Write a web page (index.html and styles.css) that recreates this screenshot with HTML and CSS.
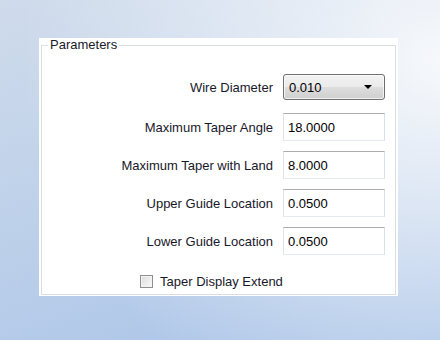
FILE: index.html
```html
<!DOCTYPE html>
<html>
<head>
<meta charset="utf-8">
<link rel="stylesheet" href="styles.css">
</head>
<body>
<div class="panel">
  <fieldset class="group">
    <legend class="legend">Parameters</legend>
    <div class="rows">
      <div class="row row-combo">
        <span class="label">Wire Diameter</span>
        <div class="combo"><span class="combo-text">0.010</span><span class="arrow"></span></div>
      </div>
      <div class="row row-first">
        <span class="label">Maximum Taper Angle</span>
        <div class="field">18.0000</div>
      </div>
      <div class="row">
        <span class="label">Maximum Taper with Land</span>
        <div class="field">8.0000</div>
      </div>
      <div class="row">
        <span class="label">Upper Guide Location</span>
        <div class="field">0.0500</div>
      </div>
      <div class="row">
        <span class="label">Lower Guide Location</span>
        <div class="field">0.0500</div>
      </div>
      <div class="check-row">
        <span class="checkbox"></span>
        <span class="check-label">Taper Display Extend</span>
      </div>
    </div>
  </fieldset>
</div>
</body>
</html>
```
FILE: styles.css
```css
html, body {
  margin: 0;
  width: 440px;
  height: 340px;
  overflow: hidden;
}
body {
  background:
    radial-gradient(ellipse 420px 380px at 440px 60px, rgba(246,248,251,1) 0%, rgba(246,248,251,0) 100%),
    linear-gradient(160deg, #cfdbeb 0%, #c0d2ea 40%, #a8c3e8 100%);
  font-family: "Liberation Sans", Arial, sans-serif;
  font-size: 13px;
  color: #18182a;
  padding: 38px 0 0 39px;
  box-sizing: border-box;
}
.panel {
  width: 359px;
  height: 258px;
  background: #ffffff;
  box-sizing: border-box;
  padding: 0 2px 1px 2px;
  display: flex;
}
.group {
  flex: 1;
  margin: 0;
  border: 1px solid #d9dee4;
  padding: 22px 0 0 6px;
  min-width: 0;
}
.legend {
  padding: 0 2px;
  font-size: 13px;
  line-height: 14px;
}
.rows {
  display: flex;
  flex-direction: column;
}
.row {
  display: grid;
  grid-template-columns: 225px 102px;
  column-gap: 10px;
  align-items: center;
  height: 28px;
  margin-top: 10px;
}
.row-combo {
  height: 26px;
  margin-top: 0;
}
.row-first {
  margin-top: 13px;
}
.label {
  text-align: right;
  white-space: nowrap;
}
.combo {
  height: 26px;
  box-sizing: border-box;
  border: 1px solid #707070;
  border-radius: 3px;
  background: linear-gradient(#f2f2f2 0%, #ebebeb 48%, #dddddd 52%, #cfcfcf 100%);
  box-shadow: inset 0 0 0 1px rgba(255,255,255,0.7);
  display: flex;
  align-items: center;
  justify-content: space-between;
  padding: 0 12px 0 5px;
}
.combo-text {
  color: #000;
}
.arrow {
  width: 0;
  height: 0;
  border-left: 4px solid transparent;
  border-right: 4px solid transparent;
  border-top: 4px solid #000;
}
.field {
  height: 28px;
  box-sizing: border-box;
  border: 1px solid;
  border-color: #abadb3 #dbdfe6 #e3e9ef #e2e3ea;
  background: #fff;
  padding: 0 4px;
  display: flex;
  align-items: center;
  color: #000;
}
.check-row {
  display: flex;
  align-items: center;
  margin: 19px 0 0 92px;
  height: 15px;
}
.checkbox {
  width: 13px;
  height: 13px;
  box-sizing: border-box;
  border: 1px solid #8e8f8f;
  background: linear-gradient(135deg, #dcdcdc, #fbfbfb);
  box-shadow: inset 0 0 0 1px #f4f4f4;
  margin-right: 7px;
}
.check-label {
  white-space: nowrap;
}
```
